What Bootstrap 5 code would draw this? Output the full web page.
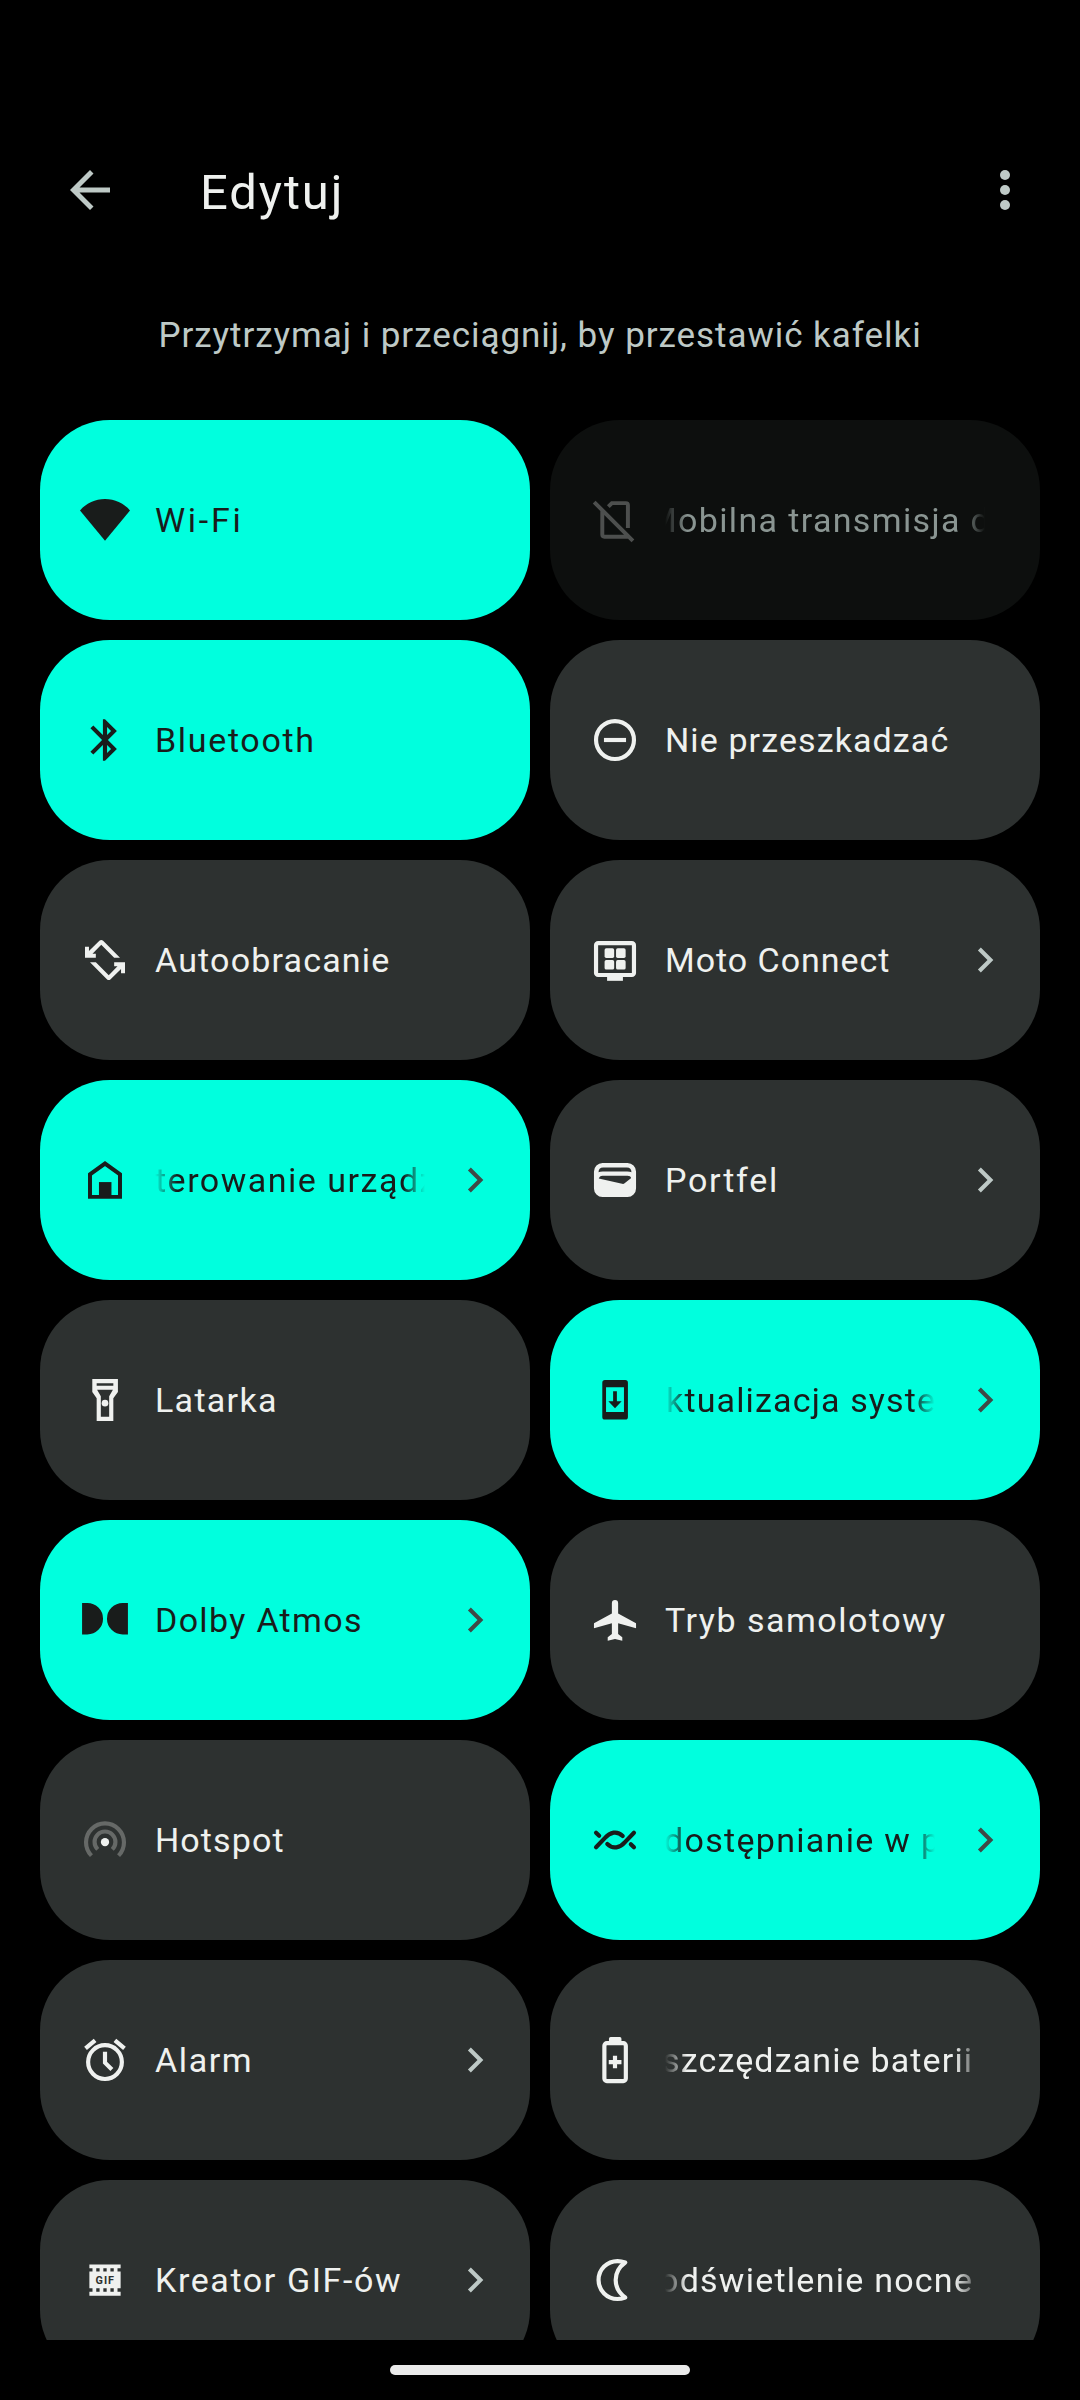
<!DOCTYPE html>
<html lang="pl" data-bs-theme="dark">
<head>
<meta charset="utf-8">
<meta name="viewport" content="width=device-width, initial-scale=1">
<title>Edytuj</title>
<link href="https://cdn.jsdelivr.net/npm/bootstrap@5.3.0/dist/css/bootstrap.min.css" rel="stylesheet">
<style>
  body { background: #000; font-family: Roboto, "Noto Sans", sans-serif; color: #eff1ef; }
  .screen { height: 2400px; width: 1080px; }
  .app-bar { height: 120px; margin-top: 130px; padding: 0 45px 0 60px; gap: 80px; color: #bec9c6; }
  .app-bar svg { width: 60px; height: 60px; }
  .app-title { font-size: 49px; line-height: 60px; padding-top: 5px; letter-spacing: 1.9px; color: #eff1ef; }
  .hint { font-size: 35px; line-height: 60px; margin-top: 56px; height: 114px; letter-spacing: .95px; color: #bec9c6; }
  .tile-list { padding: 0 40px; min-height: 0; }
  .tile-list > .row { --bs-gutter-x: 20px; --bs-gutter-y: 20px; }
  .tile { height: 200px; border-radius: 70px; padding: 0 30px 0 40px; background: #2d3130; color: #eff1ef; --arrow: #bec9c6; }
  .tile-on { background: #00ffde; color: #191c1b; --arrow: #3f4947; }
  .tile-off { background: #0d0f0e; color: #8a9592; }
  .tile-off .glyph { color: #4d4f4e; }
  .glyph { width: 50px; height: 50px; margin-right: 25px; }
  .arrow { width: 50px; height: 50px; color: var(--arrow); }
  .tile-label { font-size: 34px; line-height: 56px; margin-right: 25px; min-width: 0; letter-spacing: var(--track, 1.2px); text-indent: var(--scroll, 0); }
  .fade-ends { --fade: linear-gradient(90deg, transparent, #000 22px, #000 calc(100% - 22px), transparent); -webkit-mask-image: var(--fade); mask-image: var(--fade); }
  .fade-ends.narrow { --fade: linear-gradient(90deg, transparent, #000 22px, #000 calc(100% - 26px), transparent); margin-right: 29px; }
  .nav-zone { height: 60px; }
  .nav-handle { width: 300px; height: 10px; background: #ebebeb; }
</style>
</head>
<body>
<svg class="d-none" aria-hidden="true">
  <symbol id="chevron" viewBox="0 0 24 24"><path fill="currentColor" d="M10 6 8.6 7.4l4.6 4.6-4.6 4.6L10 18l6-6z"/></symbol>
</svg>
<main class="screen d-flex flex-column overflow-hidden">
  <header class="app-bar d-flex align-items-center flex-shrink-0">
    <svg viewBox="0 0 24 24" fill="currentColor"><path d="M20 11H7.8l5.6-5.6L12 4l-8 8 8 8 1.4-1.4L7.8 13H20z"/></svg>
    <h1 class="app-title fw-normal mb-0 flex-grow-1">Edytuj</h1>
    <svg viewBox="0 0 24 24" fill="currentColor"><circle cx="12" cy="6" r="2"/><circle cx="12" cy="12" r="2"/><circle cx="12" cy="18" r="2"/></svg>
  </header>
  <p class="hint text-center mb-0 flex-shrink-0">Przytrzymaj i przeciągnij, by przestawić kafelki</p>

  <section class="tile-list flex-grow-1 overflow-hidden">
    <div class="row row-cols-2 mt-0">
      <div class="col mt-0"><div class="tile tile-on d-flex align-items-center">
        <svg class="glyph flex-shrink-0" viewBox="0 0 24 24" fill="currentColor"><path d="M12 1.9C7.2 1.9 2.9 4 0 7.4L12 22 24 7.4C21.1 4 16.8 1.9 12 1.9z"/></svg>
        <div class="tile-label flex-grow-1 overflow-hidden text-nowrap" style="--track:2.7px">Wi-Fi</div>
      </div></div>
      <div class="col mt-0"><div class="tile tile-off d-flex align-items-center">
        <svg class="glyph flex-shrink-0" viewBox="0 0 24 24" fill="none" stroke="currentColor" stroke-width="1.9"><path d="M8.8 5.6 10.5 3.9H17.2a1 1 0 0 1 1 1v11M5.9 7.3V19a1 1 0 0 0 1 1H18.4M2 3.4 20.6 22"/></svg>
        <div class="tile-label fade-ends flex-grow-1 overflow-hidden text-nowrap" style="--track:1.35px;--scroll:-18px">Mobilna transmisja d</div>
      </div></div>

      <div class="col"><div class="tile tile-on d-flex align-items-center">
        <svg class="glyph flex-shrink-0" viewBox="0 0 24 24" fill="currentColor"><path d="M17.7 7.7 12 2h-1v7.6L6.4 5 5 6.4l5.6 5.6L5 17.6 6.4 19l4.6-4.6V22h1l5.7-5.7-4.3-4.3 4.3-4.3zM13 5.8l1.9 1.9L13 9.6V5.8zm1.9 10.5L13 18.2v-3.8l1.9 1.9z"/></svg>
        <div class="tile-label flex-grow-1 overflow-hidden text-nowrap" style="--track:1.67px">Bluetooth</div>
      </div></div>
      <div class="col"><div class="tile d-flex align-items-center">
        <svg class="glyph flex-shrink-0" viewBox="0 0 24 24" fill="none" stroke="currentColor" stroke-width="2"><circle cx="12" cy="12" r="9.1"/><path d="M6.7 12h10.6"/></svg>
        <div class="tile-label flex-grow-1 overflow-hidden text-nowrap" style="--track:1.1px">Nie przeszkadzać</div>
      </div></div>

      <div class="col"><div class="tile d-flex align-items-center">
        <svg class="glyph flex-shrink-0" viewBox="0 0 24 24" fill="currentColor"><path id="turn" d="M9.3 2.8q.9-.8 1.8 0l8.1 8.1h-2.8l-6.2-6.2L6 9h1.6v1.9H2.4V5.6h1.9v2.1z"/><use href="#turn" transform="rotate(180 12 12)"/></svg>
        <div class="tile-label flex-grow-1 overflow-hidden text-nowrap" style="--track:1.18px">Autoobracanie</div>
      </div></div>
      <div class="col"><div class="tile d-flex align-items-center">
        <svg class="glyph flex-shrink-0" viewBox="0 0 24 24" fill="currentColor"><rect x="2.9" y="3.9" width="18.2" height="15.3" rx="1" fill="none" stroke="currentColor" stroke-width="2"/><path d="M8.2 19.8h7.6V22H8.2z"/><rect x="7" y="6.4" width="4.6" height="4.6" rx=".8"/><rect x="12.5" y="6.4" width="4.6" height="4.6" rx=".8"/><rect x="7" y="12" width="4.6" height="4.6" rx=".8"/><rect x="12.5" y="12" width="4.6" height="4.6" rx=".8"/></svg>
        <div class="tile-label flex-grow-1 overflow-hidden text-nowrap" style="--track:.97px">Moto Connect</div>
        <svg class="arrow flex-shrink-0"><use href="#chevron"/></svg>
      </div></div>

      <div class="col"><div class="tile tile-on d-flex align-items-center">
        <svg class="glyph flex-shrink-0" viewBox="0 0 24 24" fill="none" stroke="currentColor" stroke-width="1.9"><path d="M4.8 20.1V9.3L12 4.1l7.2 5.2v10.8z"/><path fill="currentColor" stroke="none" d="M9.1 13h6v7h-6z"/></svg>
        <div class="tile-label fade-ends flex-grow-1 overflow-hidden text-nowrap" style="--track:1.5px">terowanie urządz</div>
        <svg class="arrow flex-shrink-0"><use href="#chevron"/></svg>
      </div></div>
      <div class="col"><div class="tile d-flex align-items-center">
        <svg class="glyph flex-shrink-0" viewBox="0 0 24 24" fill="currentColor" fill-rule="evenodd"><path d="M6 3.8h12a4.1 4.1 0 0 1 4.1 4.1v8.2a4.1 4.1 0 0 1-4.1 4.1H6a4.1 4.1 0 0 1-4.1-4.1V7.9A4.1 4.1 0 0 1 6 3.8zM4.1 8.3q.7-.4 2-.4h11.8q1.3 0 2 .4 0-2.3-2.2-2.3H6.3Q4.1 6 4.1 8.3zM4.2 11.3q.4-1.400 1.800-1.400h12q1.500 0 1.800 1.100l-3.200 2.600q-.5.4-1.200.2z"/></svg>
        <div class="tile-label flex-grow-1 overflow-hidden text-nowrap" style="--track:1.75px">Portfel</div>
        <svg class="arrow flex-shrink-0"><use href="#chevron"/></svg>
      </div></div>

      <div class="col"><div class="tile d-flex align-items-center">
        <svg class="glyph flex-shrink-0" viewBox="0 0 24 24" fill="currentColor" fill-rule="evenodd"><path d="M5.9 1.9h12.3v6.3L16 11.100v11H8v-11L5.900 8.200zM8 3.900v1.200h8V3.900zM8.200 7.100 10 10.200V20h4v-9.800l1.800-3.100z"/><circle cx="12" cy="13.5" r="1.6"/></svg>
        <div class="tile-label flex-grow-1 overflow-hidden text-nowrap" style="--track:1.3px">Latarka</div>
      </div></div>
      <div class="col"><div class="tile tile-on d-flex align-items-center">
        <svg class="glyph flex-shrink-0" viewBox="0 0 24 24" fill="currentColor" fill-rule="evenodd"><path d="M7.2 2.4h9.700q1.300 0 1.300 1.300v16.400q0 1.300-1.300 1.300H7.200q-1.300 0-1.300-1.300V3.700q0-1.300 1.300-1.300zM7.700 5.900v11.900h8.600V5.900z"/><path d="M11.1 7.8h1.8v4.8h2.300L12 15.900l-3.200-3.300h2.300z"/></svg>
        <div class="tile-label fade-ends flex-grow-1 overflow-hidden text-nowrap" style="--track:1.15px;--scroll:1px">ktualizacja syste</div>
        <svg class="arrow flex-shrink-0"><use href="#chevron"/></svg>
      </div></div>

      <div class="col"><div class="tile tile-on d-flex align-items-center">
        <svg class="glyph flex-shrink-0" viewBox="0 0 24 24" fill="currentColor"><path d="M1 3.8h2.500a7.550 7.550 0 0 1 0 15.100H1zM23 3.800h-2.500a7.550 7.550 0 0 0 0 15.100H23z"/></svg>
        <div class="tile-label flex-grow-1 overflow-hidden text-nowrap" style="--track:1.33px">Dolby Atmos</div>
        <svg class="arrow flex-shrink-0"><use href="#chevron"/></svg>
      </div></div>
      <div class="col"><div class="tile d-flex align-items-center">
        <svg class="glyph flex-shrink-0" viewBox="0 0 24 24" fill="currentColor"><path d="M13.5 8.9v-5a1.500 1.500 0 0 0-3 0v5l-8.600 4.700V16l8.600-2.500v5.200l-2 1.600V22l3.500-.9 3.500.9v-1.700l-2-1.600v-5.200l8.600 2.500v-2.400z"/></svg>
        <div class="tile-label flex-grow-1 overflow-hidden text-nowrap" style="--track:1.5px">Tryb samolotowy</div>
      </div></div>

      <div class="col"><div class="tile d-flex align-items-center">
        <svg class="glyph flex-shrink-0" viewBox="0 0 24 24" fill="none" stroke="currentColor" stroke-width="2"><circle cx="12" cy="13" r="2" fill="currentColor" stroke="none"/><path stroke="#666967" d="M5.5 19.5a9.100 9.100 0 1 1 13 0M8.500 16.500a5 5 0 1 1 7 0"/></svg>
        <div class="tile-label flex-grow-1 overflow-hidden text-nowrap" style="--track:1.1px">Hotspot</div>
      </div></div>
      <div class="col"><div class="tile tile-on d-flex align-items-center">
        <svg class="glyph flex-shrink-0" viewBox="0 0 24 24" fill="none" stroke="currentColor" stroke-width="2" stroke-linecap="round"><path d="M2.9 15.5 7.2 11C9.600 8.200 13 7.400 15.700 10.100M21.100 8.500 16.800 13C14.400 15.800 11 16.600 8.300 13.900M2.900 8.500l1.500 1.500M19.600 14l1.500 1.500"/></svg>
        <div class="tile-label fade-ends flex-grow-1 overflow-hidden text-nowrap" style="--track:1.3px;--scroll:-1px">dostępnianie w p</div>
        <svg class="arrow flex-shrink-0"><use href="#chevron"/></svg>
      </div></div>

      <div class="col"><div class="tile d-flex align-items-center">
        <svg class="glyph flex-shrink-0" viewBox="0 0 24 24" fill="currentColor"><path d="m22 5.700-4.600-3.900-1.300 1.600 4.600 3.800zM7.900 3.400 6.600 1.800 2 5.700l1.300 1.500z"/><g fill="none" stroke="currentColor" stroke-width="2"><circle cx="12" cy="13" r="8.1"/><path d="M12 8v5.300l3.300 3.300"/></g></svg>
        <div class="tile-label flex-grow-1 overflow-hidden text-nowrap" style="--track:1.6px">Alarm</div>
        <svg class="arrow flex-shrink-0"><use href="#chevron"/></svg>
      </div></div>
      <div class="col"><div class="tile d-flex align-items-center">
        <svg class="glyph flex-shrink-0 overflow-visible" viewBox="0 0 24 24" fill="none" stroke="currentColor" stroke-width="2"><rect x="6.9" y="3.9" width="10.3" height="18.2" rx="1.2"/><path fill="currentColor" stroke="none" d="M9.1 3.5V1.800q0-.8.8-.8h4.400q.8 0 .8.800v1.700z"/><path d="M9 13h6.100M12 10v6"/></svg>
        <div class="tile-label fade-ends narrow flex-grow-1 overflow-hidden text-nowrap" style="--track:1.15px;--scroll:-3px">szczędzanie baterii</div>
      </div></div>

      <div class="col"><div class="tile d-flex align-items-center">
        <svg class="glyph flex-shrink-0" viewBox="0 0 24 24" fill="currentColor" fill-rule="evenodd"><path d="M4.5 4.5h15v1.900H18v1.500h1.500V16H18v1.600h1.500v1.900h-15v-1.900H6V16H4.500V7.900H6V6.400H4.500zM7.800 6.400v1.500h1.600V6.400zm3.400 0v1.500h1.600V6.400zm3.400 0v1.500h1.600V6.400zM7.800 16v1.600h1.600V16zm3.400 0v1.600h1.600V16zm3.400 0v1.600h1.600V16z"/><text x="7.5" y="13.8" font-family="Roboto" font-weight="700" font-size="5.2" textLength="8.8" letter-spacing="0" fill="#2d3130">GIF</text></svg>
        <div class="tile-label flex-grow-1 overflow-hidden text-nowrap" style="--track:1.6px">Kreator GIF-ów</div>
        <svg class="arrow flex-shrink-0"><use href="#chevron"/></svg>
      </div></div>
      <div class="col"><div class="tile d-flex align-items-center">
        <svg class="glyph flex-shrink-0" viewBox="0 0 24 24" fill="none" stroke="currentColor" stroke-width="2" stroke-linejoin="round"><path d="M16.9 3.6Q15 2.900 13.200 2.900a9.100 9.100 0 0 0 0 18.200q1.800 0 3.700-.7c-6.100-4.400-6.100-12.400 0-16.800z"/></svg>
        <div class="tile-label fade-ends narrow flex-grow-1 overflow-hidden text-nowrap" style="--track:1.25px;--scroll:-6px">odświetlenie nocne</div>
      </div></div>
    </div>
  </section>
  <footer class="nav-zone d-flex align-items-center justify-content-center flex-shrink-0">
    <div class="nav-handle rounded-pill"></div>
  </footer>
</main>
<script src="https://cdn.jsdelivr.net/npm/bootstrap@5.3.0/dist/js/bootstrap.bundle.min.js"></script>
</body>
</html>
